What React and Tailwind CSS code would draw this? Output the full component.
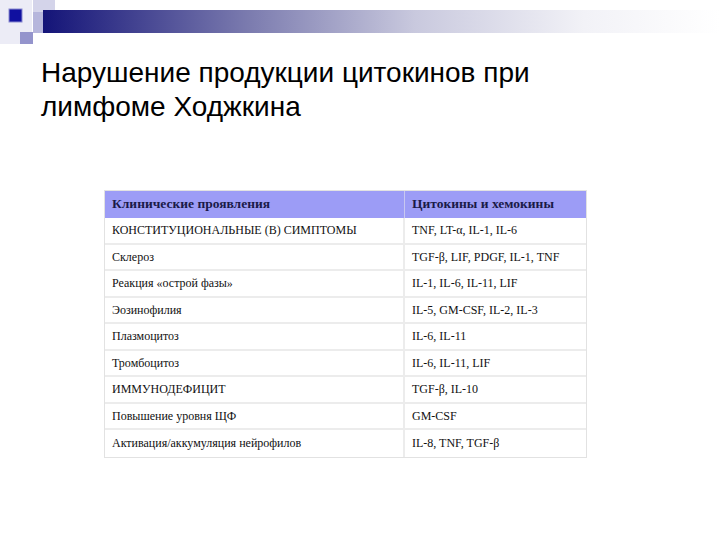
import React from 'react';

const rows = [
  ['КОНСТИТУЦИОНАЛЬНЫЕ (В) СИМПТОМЫ', 'TNF, LT-α, IL-1, IL-6'],
  ['Склероз', 'TGF-β, LIF, PDGF, IL-1, TNF'],
  ['Реакция «острой фазы»', 'IL-1, IL-6, IL-11, LIF'],
  ['Эозинофилия', 'IL-5, GM-CSF, IL-2, IL-3'],
  ['Плазмоцитоз', 'IL-6, IL-11'],
  ['Тромбоцитоз', 'IL-6, IL-11, LIF'],
  ['ИММУНОДЕФИЦИТ', 'TGF-β, IL-10'],
  ['Повышение уровня ЩФ', 'GM-CSF'],
  ['Активация/аккумуляция нейрофилов', 'IL-8, TNF, TGF-β'],
];

const SlideHeader = () => (
  <svg width="720" height="46" viewBox="0 0 720 46" className="block">
    <defs>
      <linearGradient id="bar" x1="0" x2="1" y1="0" y2="0">
        <stop offset="0" stopColor="#141478" />
        <stop offset="0.3" stopColor="#7a7aae" />
        <stop offset="0.55" stopColor="#c9c9de" />
        <stop offset="0.8" stopColor="#f2f2f7" />
        <stop offset="1" stopColor="#ffffff" />
      </linearGradient>
    </defs>
    <rect x="0" y="0" width="32" height="44" fill="#ececf6" />
    <rect x="33" y="0" width="22" height="12" fill="#d4d4ea" />
    <rect x="33" y="12" width="10" height="21" fill="#b6b6dc" />
    <rect x="43" y="10" width="677" height="23" fill="url(#bar)" />
    <rect x="9" y="9" width="13" height="13" fill="#1010a0" stroke="#8a8ad0" strokeWidth="1" />
    <rect x="20" y="32" width="13" height="12" fill="#9494cc" />
  </svg>
);

export default function App() {
  return (
    <div className="w-[720px] h-[540px] bg-white overflow-hidden">
      <SlideHeader />
      <h1
        className="ml-[41px] mt-[10px] text-[28px] leading-[34px] text-black"
        style={{ fontFamily: '"Liberation Sans", Arial, sans-serif' }}
      >
        Нарушение продукции цитокинов при
        <br />
        лимфоме Ходжкина
      </h1>
      <div
        className="ml-[104px] mt-[66px] w-[483px] border border-[#e2e2e2] text-[12px]"
        style={{ fontFamily: '"Liberation Serif", "Times New Roman", serif' }}
      >
        <div className="flex h-[27px] bg-[#9c9cf6] font-bold text-[13.5px] text-[#1a1a48]">
          <div className="w-[300px] flex items-center pl-[7px] border-r border-[#c8c8f0]">
            Клинические проявления
          </div>
          <div className="flex-1 flex items-center pl-[7px]">Цитокины и хемокины</div>
        </div>
        {rows.map(([a, b], i) => (
          <div
            key={i}
            className={`flex h-[26.5px] text-[#111] ${i < rows.length - 1 ? 'border-b-2 border-[#ececec]' : ''}`}
          >
            <div className="w-[300px] flex items-center pl-[7px] border-r-2 border-[#ececec]">{a}</div>
            <div className="flex-1 flex items-center pl-[7px]">{b}</div>
          </div>
        ))}
      </div>
    </div>
  );
}
